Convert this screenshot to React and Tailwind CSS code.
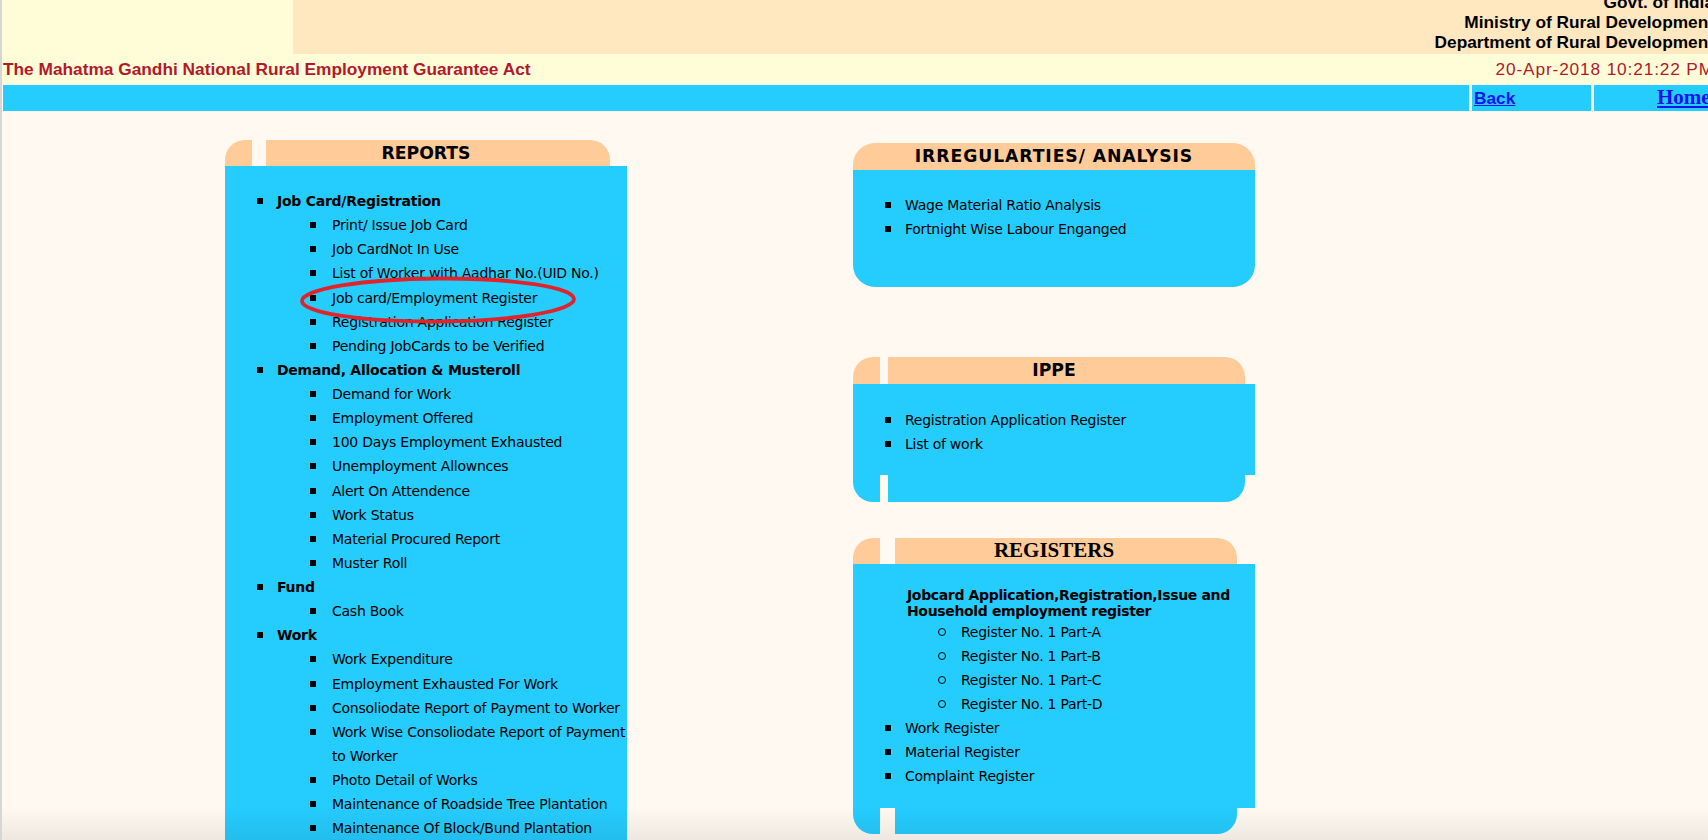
import React from 'react'

const reports = [
  {
    title: 'Job Card/Registration',
    items: [
      'Print/ Issue Job Card',
      'Job CardNot In Use',
      'List of Worker with Aadhar No.(UID No.)',
      'Job card/Employment Register',
      'Registration Application Register',
      'Pending JobCards to be Verified',
    ],
  },
  {
    title: 'Demand, Allocation & Musteroll',
    items: [
      'Demand for Work',
      'Employment Offered',
      '100 Days Employment Exhausted',
      'Unemployment Allownces',
      'Alert On Attendence',
      'Work Status',
      'Material Procured Report',
      'Muster Roll',
    ],
  },
  { title: 'Fund', items: ['Cash Book'] },
  {
    title: 'Work',
    items: [
      'Work Expenditure',
      'Employment Exhausted For Work',
      'Consoliodate Report of Payment to Worker',
      ['Work Wise Consoliodate Report of Payment', 'to Worker'],
      'Photo Detail of Works',
      'Maintenance of Roadside Tree Plantation',
      'Maintenance Of Block/Bund Plantation',
      'Maintenance of Individual Plantation',
    ],
  },
]

const Square = () => <span className="mt-[9px] h-[6px] w-[6px] shrink-0 bg-black" />
const Circle = () => <span className="mt-[8px] h-[8px] w-[8px] shrink-0 rounded-full border-[1.5px] border-black" />

function Item({ children, bold }) {
  return (
    <li className="flex pl-[32px]">
      <Square />
      <span className={`ml-[14px] whitespace-nowrap ${bold ? 'font-bold' : ''}`}>{children}</span>
    </li>
  )
}

function SubItem({ children, circle }) {
  const lines = Array.isArray(children) ? children : [children]
  return (
    <li className="flex pl-[85px]">
      {circle ? <Circle /> : <Square />}
      <span className={`whitespace-nowrap ${circle ? 'ml-[15px]' : 'ml-[15px] pl-[1px]'}`}>
        {lines.map((l, i) => (
          <span key={i} className="block">{l}</span>
        ))}
      </span>
    </li>
  )
}

export default function App() {
  return (
    <div className="relative h-[840px] w-full overflow-hidden border-l-2 border-[#d6d6d6] bg-[#fff9f1] text-black font-['Liberation_Sans',Arial,sans-serif]">
      <div className="w-[1712px]">
        {/* top band */}
        <div className="flex h-[54px]">
          <div className="w-[291px] bg-[#fffdd8]" />
          <div className="flex flex-1 flex-col items-end justify-end overflow-hidden bg-[#ffe7bf] pb-[2px] text-[17.3px] font-bold leading-[20px]">
            <div>Govt. of India</div>
            <div>Ministry of Rural Development</div>
            <div>Department of Rural Development</div>
          </div>
        </div>

        {/* title row */}
        <div className="flex h-[30px] items-start justify-between bg-[#fffdd8] pl-[1px] text-[17.3px] leading-[30px] text-[#b3182b]">
          <span className="font-bold">The Mahatma Gandhi National Rural Employment Guarantee Act</span>
          <span className="tracking-[0.85px]">20-Apr-2018 10:21:22 PM</span>
        </div>

        {/* nav bar */}
        <div className="flex h-[28px] gap-[3px] bg-[#fffdf6] p-[1px]">
          <div className="flex-1 bg-[#25ccfe]" />
          <div className="w-[119px] bg-[#25ccfe] pl-[2px] text-[17.3px] font-bold leading-[26px]">
            <a className="text-[#1212f0] underline">Back</a>
          </div>
          <div className="w-[119px] bg-[#25ccfe] pl-[63px] font-['Liberation_Serif','Times_New_Roman',serif] text-[21px] font-bold leading-[25px]">
            <a className="text-[#1212f0] underline">Home</a>
          </div>
        </div>

        {/* panels */}
        <div className="flex pt-[28px] font-['DejaVu_Sans',Verdana,sans-serif] text-[14px] tracking-[-0.25px]">
          {/* REPORTS */}
          <div className="relative ml-[223px] w-[402px]">
            <div className="grid h-[26px]">
              <div className="col-start-1 row-start-1 flex">
                <div className="w-[27px] rounded-tl-[20px] bg-[#ffcc99]" />
                <div className="w-[14px]" />
                <div className="w-[344px] rounded-tr-[20px] bg-[#ffcc99]" />
              </div>
              <div className="col-start-1 row-start-1 text-center text-[17.25px] font-bold leading-[26px] tracking-normal">REPORTS</div>
            </div>
            <div className="bg-[#25ccfe] pb-[80px] pt-[23px] leading-[24.13px]">
              <ul>
                {reports.map(group => (
                  <React.Fragment key={group.title}>
                    <Item bold>{group.title}</Item>
                    {group.items.map(it => (
                      <SubItem key={String(it)}>{it}</SubItem>
                    ))}
                  </React.Fragment>
                ))}
              </ul>
            </div>
            {/* hand-drawn highlight */}
            <svg className="absolute left-[73px] top-[135px]" width="282" height="50" viewBox="0 0 282 50">
              <ellipse cx="140" cy="25" rx="136" ry="21.5" fill="none" stroke="#e1242b" strokeWidth="3.8" transform="rotate(-0.4 140 25)" />
            </svg>
          </div>

          {/* right column */}
          <div className="ml-[226px] w-[402px] pt-[3px]">
            {/* IRREGULARTIES */}
            <div className="h-[27px] rounded-t-[22px] bg-[#ffcc99] text-center text-[17.25px] font-bold leading-[27px] tracking-[0.9px]">
              IRREGULARTIES/ ANALYSIS
            </div>
            <ul className="rounded-b-[22px] bg-[#25ccfe] pb-[46px] pt-[23px] leading-[24px]">
              <Item>Wage Material Ratio Analysis</Item>
              <Item>Fortnight Wise Labour Enganged</Item>
            </ul>

            {/* IPPE */}
            <div className="mt-[70px]">
              <div className="grid h-[27px]">
                <div className="col-start-1 row-start-1 flex">
                  <div className="w-[27px] rounded-tl-[20px] bg-[#ffcc99]" />
                  <div className="w-[8px]" />
                  <div className="w-[357px] rounded-tr-[20px] bg-[#ffcc99]" />
                </div>
                <div className="col-start-1 row-start-1 text-center text-[17.25px] font-bold leading-[27px] tracking-normal">IPPE</div>
              </div>
              <ul className="bg-[#25ccfe] pb-[19px] pt-[24px] leading-[24px]">
                <Item>Registration Application Register</Item>
                <Item>List of work</Item>
              </ul>
              <div className="flex h-[27px]">
                <div className="w-[27px] rounded-bl-[20px] bg-[#25ccfe]" />
                <div className="w-[8px]" />
                <div className="w-[357px] rounded-br-[20px] bg-[#25ccfe]" />
              </div>
            </div>

            {/* REGISTERS */}
            <div className="mt-[36px]">
              <div className="grid h-[26px]">
                <div className="col-start-1 row-start-1 flex">
                  <div className="w-[27px] rounded-tl-[20px] bg-[#ffcc99]" />
                  <div className="w-[15px]" />
                  <div className="w-[342px] rounded-tr-[20px] bg-[#ffcc99]" />
                </div>
                <div className="col-start-1 row-start-1 text-center font-['Liberation_Serif','Times_New_Roman',serif] text-[21px] font-bold leading-[24px] tracking-normal">
                  REGISTERS
                </div>
              </div>
              <div className="bg-[#25ccfe] pb-[20px] pt-[23px]">
                <div className="pl-[54px] font-bold leading-[16.3px] tracking-[-0.35px]">
                  <div className="whitespace-nowrap">Jobcard Application,Registration,Issue and</div>
                  <div className="whitespace-nowrap">Household employment register</div>
                </div>
                <ul className="leading-[24px]">
                  <SubItem circle>Register No. 1 Part-A</SubItem>
                  <SubItem circle>Register No. 1 Part-B</SubItem>
                  <SubItem circle>Register No. 1 Part-C</SubItem>
                  <SubItem circle>Register No. 1 Part-D</SubItem>
                  <Item>Work Register</Item>
                  <Item>Material Register</Item>
                  <Item>Complaint Register</Item>
                </ul>
              </div>
              <div className="flex h-[26px]">
                <div className="w-[27px] rounded-bl-[20px] bg-[#25ccfe]" />
                <div className="w-[15px]" />
                <div className="w-[342px] rounded-br-[20px] bg-[#25ccfe]" />
              </div>
            </div>
          </div>
        </div>
      </div>

      {/* window shadow along the bottom edge */}
      <div className="pointer-events-none absolute inset-x-0 bottom-0 h-[34px] bg-linear-to-t from-black/[0.07] to-transparent" />
    </div>
  )
}
